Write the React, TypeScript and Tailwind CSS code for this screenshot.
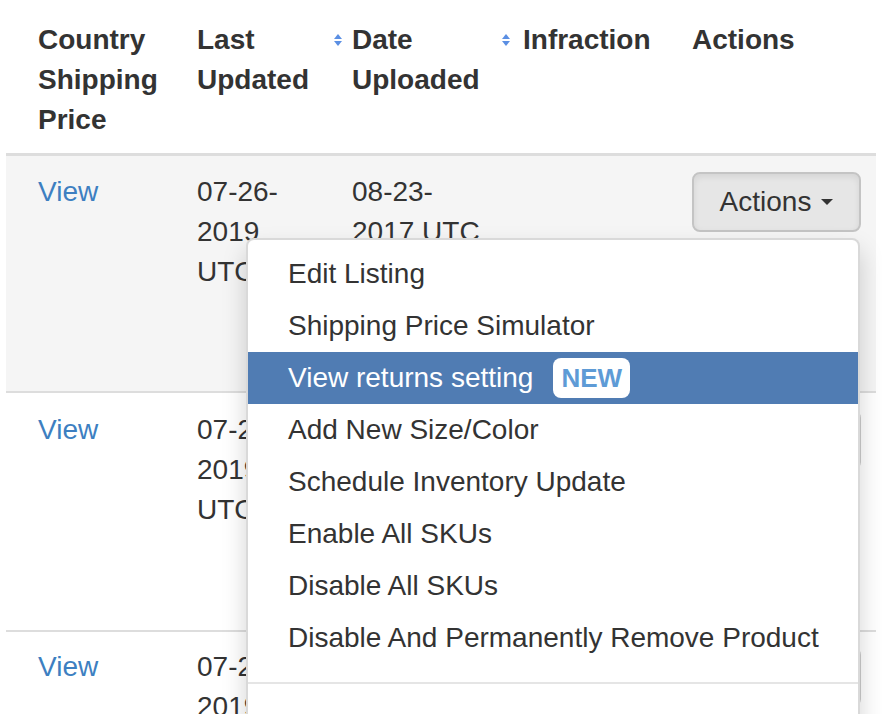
import React from "react";

function SortIcon() {
  return (
    <svg width="8" height="14" viewBox="0 0 8 14" className="block">
      <polygon points="0,6 4,1 8,6" fill="#5b8fe3" />
      <polygon points="0,8 8,8 4,13" fill="#5b8fe3" />
    </svg>
  );
}

function Caret() {
  return (
    <span className="inline-block w-0 h-0 border-l-[6px] border-r-[6px] border-t-[6px] border-l-transparent border-r-transparent border-t-[#333]" />
  );
}

function ActionsButton({ open }: { open?: boolean }) {
  return (
    <button
      className={
        "w-full h-[60px] flex items-center justify-center gap-[10px] rounded-[8px] border-2 text-[28px] leading-[40px] text-[#333] " +
        (open
          ? "bg-[#e6e6e6] border-[#c4c4c4] shadow-[inset_0_3px_6px_rgba(0,0,0,0.08)]"
          : "bg-gradient-to-b from-white to-[#e0e0e0] border-[#ccc]")
      }
    >
      <span>Actions</span>
      <Caret />
    </button>
  );
}

const items = [
  "Edit Listing",
  "Shipping Price Simulator",
  "View returns setting",
  "Add New Size/Color",
  "Schedule Inventory Update",
  "Enable All SKUs",
  "Disable All SKUs",
  "Disable And Permanently Remove Product",
];

function Menu() {
  return (
    <div className="absolute right-[1px] top-[66px] z-10 w-[614px] bg-white border-2 border-[rgba(0,0,0,0.15)] rounded-[8px] shadow-[0_12px_24px_rgba(0,0,0,0.175)] pt-[8px] pb-[40px]">
      {items.map((it, i) =>
        i === 2 ? (
          <div
            key={it}
            className="flex items-center h-[52px] px-[40px] bg-[#507cb3] text-white whitespace-nowrap"
          >
            <span>{it}</span>
            <span className="ml-[20px] h-[40px] flex items-center px-[8px] rounded-[8px] bg-white text-[#5e9bd6] font-bold text-[26px]">
              NEW
            </span>
          </div>
        ) : (
          <div
            key={it}
            className="h-[52px] px-[40px] py-[6px] text-[#333] whitespace-nowrap"
          >
            {it}
          </div>
        )
      )}
      <div className="my-[18px] h-[2px] bg-[#e5e5e5]" />
    </div>
  );
}

function Row({
  bg,
  height,
  pt,
  last,
  lu,
  du,
  open,
}: {
  bg: string;
  height: string;
  pt: string;
  last?: boolean;
  lu: string[];
  du: string[];
  open?: boolean;
}) {
  return (
    <tr className={bg + " " + height + (last ? "" : " border-b-2 border-[#ddd]")}>
      <td className={"align-top pl-[32px] pr-[16px] " + pt}>
        <a className="text-[#3d7fc1]">View</a>
      </td>
      <td className={"align-top pl-[16px] pr-[16px] " + pt}>
        {lu.map((l) => (
          <div key={l}>{l}</div>
        ))}
      </td>
      <td className={"align-top pl-[16px] pr-[16px] " + pt}>
        {du.map((l) => (
          <div key={l}>{l}</div>
        ))}
      </td>
      <td className={"align-top pl-[16px] pr-[16px] " + pt}></td>
      <td className={"align-top pl-[16px] pr-[15px] " + pt}>
        <div className="relative w-[169px]">
          <ActionsButton open={open} />
          {open && <Menu />}
        </div>
      </td>
    </tr>
  );
}

export default function App() {
  return (
    <div className="w-[882px] h-[714px] overflow-hidden bg-white font-['Liberation_Sans',Arial,sans-serif] text-[28px] leading-[40px] text-[#333]">
      <table className="ml-[6px] w-[870px] table-fixed border-collapse">
        <colgroup>
          <col className="w-[175px]" />
          <col className="w-[155px]" />
          <col className="w-[171px]" />
          <col className="w-[169px]" />
          <col className="w-[200px]" />
        </colgroup>
        <thead>
          <tr className="border-b-[3px] border-[#ddd]">
            <th className="align-top text-left font-bold pt-[20px] pb-[13px] pl-[32px] pr-[16px]">
              Country
              <br />
              Shipping
              <br />
              Price
            </th>
            <th className="relative align-top text-left font-bold pt-[20px] pb-[13px] pl-[16px] pr-[16px]">
              Last
              <br />
              Updated
              <span className="absolute left-[153px] top-[33px]">
                <SortIcon />
              </span>
            </th>
            <th className="relative align-top text-left font-bold pt-[20px] pb-[13px] pl-[16px] pr-[16px]">
              Date
              <br />
              Uploaded
              <span className="absolute left-[166px] top-[33px]">
                <SortIcon />
              </span>
            </th>
            <th className="align-top text-left font-bold pt-[20px] pb-[13px] pl-[16px] pr-[16px]">
              Infraction
            </th>
            <th className="align-top text-left font-bold pt-[20px] pb-[13px] pl-[16px] pr-[16px]">
              Actions
            </th>
          </tr>
        </thead>
        <tbody>
          <Row
            bg="bg-[#f5f5f5]"
            height="h-[237px]"
            pt="pt-[16px]"
            lu={["07-26-", "2019", "UTC"]}
            du={["08-23-", "2017 UTC"]}
            open
          />
          <Row
            bg="bg-white"
            height="h-[239px]"
            pt="pt-[17px]"
            lu={["07-26-", "2019", "UTC"]}
            du={["08-23-", "2017 UTC"]}
          />
          <Row
            bg="bg-white"
            height="h-[240px]"
            pt="pt-[15px]"
            last
            lu={["07-26-", "2019", "UTC"]}
            du={["08-23-", "2017 UTC"]}
          />
        </tbody>
      </table>
    </div>
  );
}
